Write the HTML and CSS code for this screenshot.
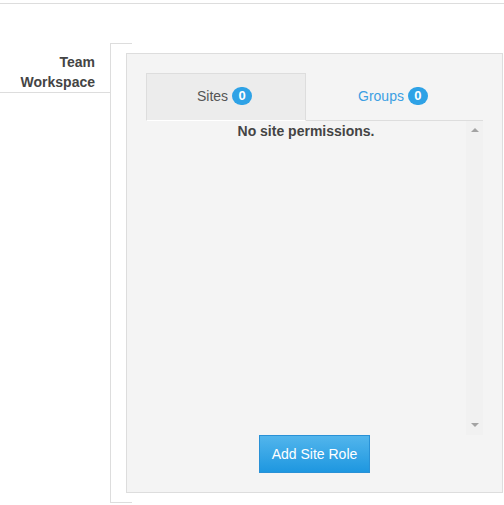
FILE: index.html
```html
<!DOCTYPE html>
<html>
<head>
<meta charset="utf-8">
<link rel="stylesheet" href="styles.css">
</head>
<body>
<div class="topbar"></div>
<div class="row">
  <div class="label">Team Workspace</div>
  <div class="bracket">
    <div class="panel">
      <div class="tabs">
        <div class="tab active">Sites <span class="badge">0</span></div>
        <div class="tab link">Groups <span class="badge">0</span></div>
      </div>
      <div class="content">
        <div class="list">No site permissions.</div>
        <div class="scrollbar">
          <span class="arrow up"></span>
          <span class="arrow down"></span>
        </div>
      </div>
      <div class="actions">
        <button class="btn">Add Site Role</button>
      </div>
    </div>
  </div>
</div>
</body>
</html>
```
FILE: styles.css
```css
* { box-sizing: border-box; }
html, body { margin: 0; padding: 0; background: #fff; }
body {
  font-family: "Liberation Sans", Arial, sans-serif;
  font-size: 14px;
  line-height: 20px;
  color: #444;
}
.topbar {
  height: 4px;
  border-bottom: 1px solid #ddd;
}
.row {
  display: flex;
  align-items: flex-start;
  margin-top: 39px;
}
.label {
  width: 110px;
  flex: none;
  text-align: right;
  padding: 9px 15px 0 0;
  font-weight: bold;
  border-bottom: 1px solid #ddd;
}
.bracket {
  position: relative;
  border-left: 1px solid #ddd;
  padding: 10px 0 10px 15px;
}
.bracket::before,
.bracket::after {
  content: "";
  position: absolute;
  left: 0;
  width: 21px;
  height: 1px;
  background: #ddd;
}
.bracket::before { top: 0; }
.bracket::after { bottom: 0; }
.panel {
  width: 377px;
  height: 440px;
  border: 1px solid #ddd;
  background: #f4f4f4;
  padding: 19px;
  display: flex;
  flex-direction: column;
}
.tabs {
  display: grid;
  grid-template-columns: 160px 1fr;
  border-bottom: 1px solid #ddd;
  height: 48px;
}
.tab {
  display: flex;
  align-items: center;
  justify-content: center;
  gap: 4px;
  height: 48px;
  padding: 0 3px 2px 0;
}
.tab.active {
  background: #ececec;
  border: 1px solid #ddd;
  border-bottom: 1px solid #fff;
  color: #555;
}
.tab.link { color: #3c9fe3; }
.badge {
  display: inline-block;
  min-width: 20px;
  height: 18px;
  line-height: 18px;
  border-radius: 9px;
  background: #2ea2e6;
  color: #fff;
  font-weight: bold;
  font-size: 13px;
  text-align: center;
  padding: 0 4px;
}
.content {
  display: flex;
  height: 314px;
}
.list {
  flex: 1;
  text-align: center;
  font-weight: bold;
  color: #444;
}
.scrollbar {
  width: 17px;
  flex: none;
  background: #f1f1f1;
  display: flex;
  flex-direction: column;
  justify-content: space-between;
  align-items: center;
  padding: 7px 0 8px;
}
.arrow {
  width: 0;
  height: 0;
  border-left: 4px solid transparent;
  border-right: 4px solid transparent;
}
.arrow.up { border-bottom: 4px solid #a3a3a3; }
.arrow.down { border-top: 4px solid #a3a3a3; }
.actions {
  display: flex;
  justify-content: center;
}
.btn {
  height: 38px;
  width: 111px;
  padding: 0;
  border: 1px solid #2991d6;
  background: linear-gradient(#52b5ec, #1e97e0);
  color: #fff;
  font-family: "Liberation Sans", Arial, sans-serif;
  font-size: 14px;
  cursor: pointer;
}
```
